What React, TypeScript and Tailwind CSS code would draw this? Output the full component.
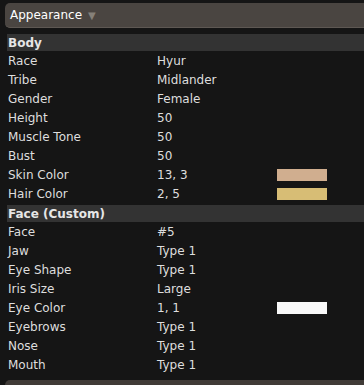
type Row = { label: string; value: string; swatch?: string };

const body: Row[] = [
	{ label: "Race", value: "Hyur" },
	{ label: "Tribe", value: "Midlander" },
	{ label: "Gender", value: "Female" },
	{ label: "Height", value: "50" },
	{ label: "Muscle Tone", value: "50" },
	{ label: "Bust", value: "50" },
	{ label: "Skin Color", value: "13, 3", swatch: "#d0ae8f" },
	{ label: "Hair Color", value: "2, 5", swatch: "#d7bd75" },
];

const face: Row[] = [
	{ label: "Face", value: "#5" },
	{ label: "Jaw", value: "Type 1" },
	{ label: "Eye Shape", value: "Type 1" },
	{ label: "Iris Size", value: "Large" },
	{ label: "Eye Color", value: "1, 1", swatch: "#f8f8f8" },
	{ label: "Eyebrows", value: "Type 1" },
	{ label: "Nose", value: "Type 1" },
	{ label: "Mouth", value: "Type 1" },
];

function Section({ title, rows }: { title: string; rows: Row[] }) {
	return (
		<div className="flex flex-col shrink-0">
			<div className="ml-[7px] h-[17px] shrink-0 bg-[#333333] pl-[1px] flex items-center text-[12px] font-bold text-[#e6e6e6]">
				{title}
			</div>
			{rows.map((r) => (
				<div key={r.label} className="h-[19px] shrink-0 flex items-center text-[12px] text-[#dedede]">
					<span className="w-[157px] pl-[8px]">{r.label}</span>
					<span className="w-[120px]">{r.value}</span>
					{r.swatch && (
						<span className="w-[50px] h-[12px]" style={{ backgroundColor: r.swatch }} />
					)}
				</div>
			))}
		</div>
	);
}

export default function App() {
	return (
		<div
			className="w-[364px] h-[385px] overflow-hidden bg-[#151515] flex flex-col pt-[3px]"
			style={{ fontFamily: '"DejaVu Sans", Verdana, sans-serif' }}
		>
			{/* Panel title bar */}
			<div className="ml-[5px] h-[25px] shrink-0 rounded-l-[5px] bg-[#4a4541] border-b border-[#5e5853] flex items-center pl-[5px] gap-[6px]">
				<span className="text-[12px] text-white">Appearance</span>
				<span className="text-[10px] text-[#858079]">▼</span>
			</div>

			<div className="mt-[6px] shrink-0 flex flex-col gap-[2px]">
				<Section title="Body" rows={body} />
				<Section title="Face (Custom)" rows={face} />
			</div>

			{/* Next collapsed panel peeking in */}
			<div className="mt-[6px] ml-[5px] h-[20px] shrink-0 rounded-tl-[5px] bg-[#403b37]" />
		</div>
	);
}
